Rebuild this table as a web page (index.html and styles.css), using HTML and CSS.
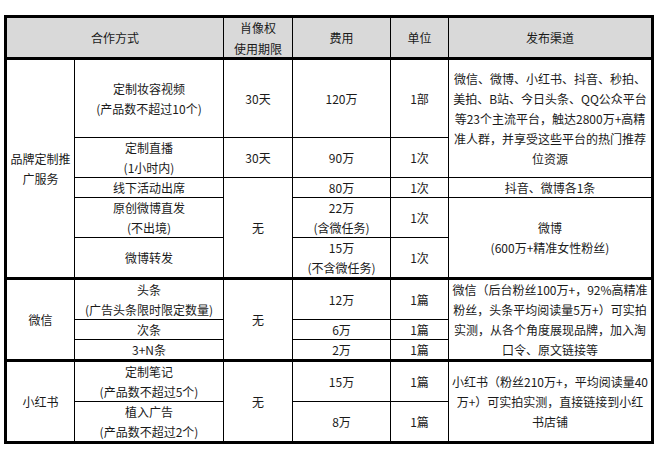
FILE: index.html
```html
<!DOCTYPE html>
<html lang="zh-CN">
<head>
<meta charset="utf-8">
<title>合作方式</title>
<link rel="stylesheet" href="styles.css">
</head>
<body>
<div class="sheet">
  <div class="c hd cs2">合作方式</div>
  <div class="c hd">肖像权<br>使用期限</div>
  <div class="c hd">费用</div>
  <div class="c hd">单位</div>
  <div class="c hd last">发布渠道</div>

  <div class="c rs5 thick">品牌定制推<br>广服务</div>
  <div class="c">定制妆容视频<br>(产品数不超过10个)</div>
  <div class="c">30天</div>
  <div class="c">120万</div>
  <div class="c">1部</div>
  <div class="c rs2 last">微信、微博、小红书、抖音、秒拍、<br>美拍、B站、今日头条、QQ公众平台<br>等23个主流平台，触达2800万+高精<br>准人群，并享受这些平台的热门推荐<br>位资源</div>

  <div class="c">定制直播<br>(1小时内)</div>
  <div class="c">30天</div>
  <div class="c">90万</div>
  <div class="c">1次</div>

  <div class="c">线下活动出席</div>
  <div class="c rs3 thick">无</div>
  <div class="c">80万</div>
  <div class="c">1次</div>
  <div class="c last">抖音、微博各1条</div>

  <div class="c">原创微博直发<br>(不出境)</div>
  <div class="c">22万<br>(含微任务)</div>
  <div class="c">1次</div>
  <div class="c rs2 last thick">微博<br>(600万+精准女性粉丝)</div>

  <div class="c thick">微博转发</div>
  <div class="c thick">15万<br>(不含微任务)</div>
  <div class="c thick">1次</div>

  <div class="c rs3 thick">微信</div>
  <div class="c">头条<br>(广告头条限时限定数量)</div>
  <div class="c rs3 thick">无</div>
  <div class="c">12万</div>
  <div class="c">1篇</div>
  <div class="c rs3 last thick">微信（后台粉丝100万+，92%高精准<br>粉丝，头条平均阅读量5万+）可实拍<br>实测，从各个角度展现品牌，加入淘<br>口令、原文链接等</div>

  <div class="c">次条</div>
  <div class="c">6万</div>
  <div class="c">1篇</div>

  <div class="c thick">3+N条</div>
  <div class="c thick">2万</div>
  <div class="c thick">1篇</div>

  <div class="c rs2 end">小红书</div>
  <div class="c">定制笔记<br>(产品数不超过5个)</div>
  <div class="c rs2 end">无</div>
  <div class="c">15万</div>
  <div class="c">1篇</div>
  <div class="c rs2 last end">小红书（粉丝210万+，平均阅读量40<br>万+）可实拍实测，直接链接到小红<br>书店铺</div>

  <div class="c end">植入广告<br>(产品数不超过2个)</div>
  <div class="c end">8万</div>
  <div class="c end">1篇</div>
</div>
</body>
</html>
```

FILE: styles.css
```css
html, body {
  margin: 0;
  padding: 0;
  background: #fff;
}

body {
  font-family: "Noto Sans CJK SC", "Noto Sans", "Liberation Sans", sans-serif;
  font-size: 12px;
  color: #1a1a1a;
}

.sheet {
  display: grid;
  grid-template-columns: 68px 149px 69px 98px 58px 202px;
  grid-template-rows: 42px 78px 40px 20px 40px 42px 40px 20px 22px 40px 39px;
  width: max-content;
  margin: 15px 0 0 4px;
  border: 3px solid #000;
}

.c {
  box-sizing: border-box;
  display: flex;
  align-items: center;
  justify-content: center;
  text-align: center;
  line-height: 20px;
  white-space: nowrap;
  border-right: 1px solid #000;
  border-bottom: 1px solid #000;
  background: #fff;
  overflow: visible;
}

.hd {
  background: #d9d9d9;
  border-bottom: 3px solid #000;
  line-height: 21px;
}

.cs2 { grid-column: span 2; }
.rs2 { grid-row: span 2; }
.rs3 { grid-row: span 3; }
.rs5 { grid-row: span 5; }

.thick { border-bottom: 3px solid #000; }
.end { border-bottom: none; }
.last { border-right: none; }
```
